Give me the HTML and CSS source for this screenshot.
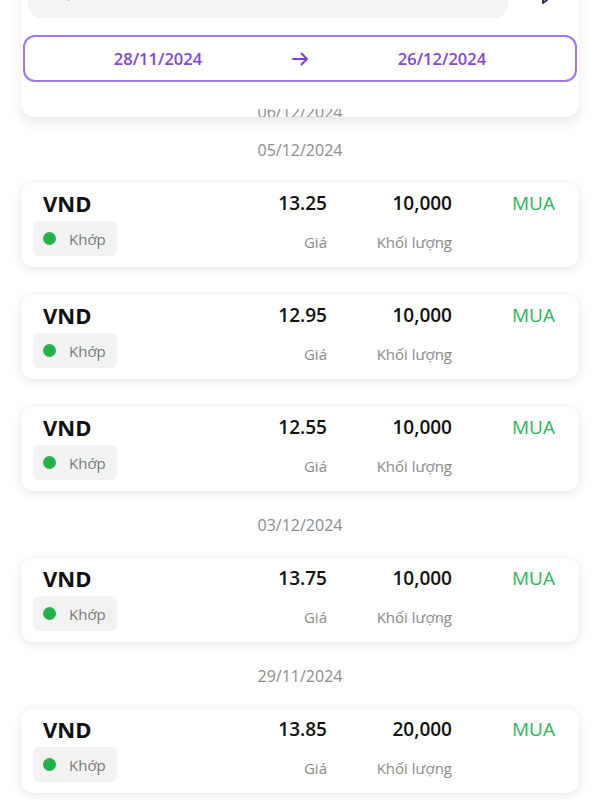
FILE: index.html
```html
<!DOCTYPE html>
<html lang="vi">
<head>
  <meta charset="UTF-8" />
  <meta name="viewport" content="width=device-width, initial-scale=1.0" />
  <title>Lịch sử lệnh</title>
  <link rel="stylesheet" href="styles.css">
</head>
<body>

  <!-- Thanh tìm kiếm + khoảng ngày -->
  <div class="panel">
    <div class="search-row">
      <div class="search">
        <svg class="search__icon" viewBox="0 0 20 20" fill="none" stroke="#5a5a5a" stroke-width="1.8" stroke-linecap="round">
          <circle cx="8.5" cy="8.5" r="6"/>
          <path d="M13 13l5.5 5.5"/>
        </svg>
      </div>
      <svg class="filter" viewBox="0 0 20 20" fill="none" stroke="#2d2450" stroke-width="1.8" stroke-linejoin="round">
        <path d="M2 2h16l-6 7.5v6.5l-4 3v-9.5z"/>
      </svg>
    </div>

    <div class="range">
      <span class="range__date">28/11/2024</span>
      <svg class="range__arrow" viewBox="0 0 18 18" fill="none" stroke="#7e3fd8" stroke-width="2" stroke-linecap="round" stroke-linejoin="round">
        <path d="M2 9h14M10.5 3.5L16 9l-5.5 5.5"/>
      </svg>
      <span class="range__date">26/12/2024</span>
    </div>

    <!-- nhóm ngày đang cuộn dưới thanh -->
    <div class="peek"><span class="day">06/12/2024</span></div>
  </div>

  <!-- Danh sách lệnh -->
  <div class="list">

    <div class="day">05/12/2024</div>
    <div class="cards">
      <div class="card">
        <b class="card__code">VND</b>
        <span class="card__num">13.25</span>
        <span class="card__num">10,000</span>
        <span class="card__side">MUA</span>
        <span class="badge"><i class="badge__dot"></i>Khớp</span>
        <span class="card__label">Giá</span>
        <span class="card__label">Khối lượng</span>
      </div>
      <div class="card">
        <b class="card__code">VND</b>
        <span class="card__num">12.95</span>
        <span class="card__num">10,000</span>
        <span class="card__side">MUA</span>
        <span class="badge"><i class="badge__dot"></i>Khớp</span>
        <span class="card__label">Giá</span>
        <span class="card__label">Khối lượng</span>
      </div>
      <div class="card">
        <b class="card__code">VND</b>
        <span class="card__num">12.55</span>
        <span class="card__num">10,000</span>
        <span class="card__side">MUA</span>
        <span class="badge"><i class="badge__dot"></i>Khớp</span>
        <span class="card__label">Giá</span>
        <span class="card__label">Khối lượng</span>
      </div>
    </div>

    <div class="day">03/12/2024</div>
    <div class="cards">
      <div class="card">
        <b class="card__code">VND</b>
        <span class="card__num">13.75</span>
        <span class="card__num">10,000</span>
        <span class="card__side">MUA</span>
        <span class="badge"><i class="badge__dot"></i>Khớp</span>
        <span class="card__label">Giá</span>
        <span class="card__label">Khối lượng</span>
      </div>
    </div>

    <div class="day">29/11/2024</div>
    <div class="cards">
      <div class="card">
        <b class="card__code">VND</b>
        <span class="card__num">13.85</span>
        <span class="card__num">20,000</span>
        <span class="card__side">MUA</span>
        <span class="badge"><i class="badge__dot"></i>Khớp</span>
        <span class="card__label">Giá</span>
        <span class="card__label">Khối lượng</span>
      </div>
    </div>

  </div>
</body>
</html>
```

FILE: styles.css
```css
/* RESET & BASE --------------------------------------------------------*/
*,::before,::after{box-sizing:border-box;margin:0;padding:0}
body{
  font-family:"Open Sans","Noto Sans",sans-serif;
  background:#fff;
  color:#111;
  overflow:hidden;
}

/* PANEL (tìm kiếm + ngày) ---------------------------------------------*/
.panel{
  position:relative;
  z-index:1;
  margin:-26px 21px 0;                 /* phần trên đã cuộn khỏi màn hình */
  background:#fff;
  border-radius:0 0 14px 14px;
  box-shadow:0 6px 12px rgba(0,0,0,.09);
}
.search-row{display:flex;align-items:center;padding-left:7px}
.search{
  width:480px;height:44px;
  background:#f4f4f6;
  border-radius:14px;
  display:flex;align-items:center;
  padding-left:22px;
}
.search__icon{width:20px;height:20px;margin-top:-10px}
.filter{width:20px;height:20px;margin:-4px 0 0 27px}

.range{
  display:grid;
  grid-template-columns:1fr 18px 1fr;
  align-items:center;
  height:47px;
  margin:17px 2px 0;
  border:2px solid #a077e6;
  border-radius:12px;
}
.range__date{
  text-align:center;
  font-size:16.5px;
  font-weight:600;
  color:#8246da;
}
.range__arrow{width:18px;height:18px}

.peek{
  height:8px;
  margin-top:27px;
  overflow:hidden;
  display:flex;justify-content:center;align-items:flex-end;
}
.peek .day{margin-bottom:-6px}

/* DANH SÁCH -----------------------------------------------------------*/
.list{padding-top:22px}
.day{
  font-size:16px;
  line-height:22px;
  color:#8c8c8c;
  text-align:center;
}
.list .day{margin-bottom:22px}
.cards{display:flex;flex-direction:column;gap:28px;margin-bottom:23px}

.card{
  display:grid;
  grid-template-columns:1fr 90px 125px 103px;
  grid-template-rows:28px 35px;
  row-gap:4px;
  margin:0 21px;
  padding:6px 24px 11px 12px;
  background:#fff;
  border-radius:12px;
  box-shadow:0 2px 10px rgba(0,0,0,.11);
}
.card__code{font-size:22px;line-height:28px;font-weight:700;padding-left:10px}
.card__num{font-size:19px;line-height:28px;font-weight:600;text-align:right}
.card__side{font-size:19px;line-height:28px;color:#2cb55a;text-align:right}
.card__label{
  align-self:center;
  margin-top:7px;
  font-size:15px;
  line-height:20px;
  color:#8a8a8a;
  text-align:right;
}

.badge{
  justify-self:start;
  display:inline-flex;align-items:center;gap:13px;
  height:35px;
  padding:0 11px 0 10px;
  background:#f2f2f2;
  border-radius:6px;
  font-size:15px;
  color:#7a7a7a;
}
.badge__dot{width:13px;height:13px;border-radius:50%;background:#22b24c}
```
